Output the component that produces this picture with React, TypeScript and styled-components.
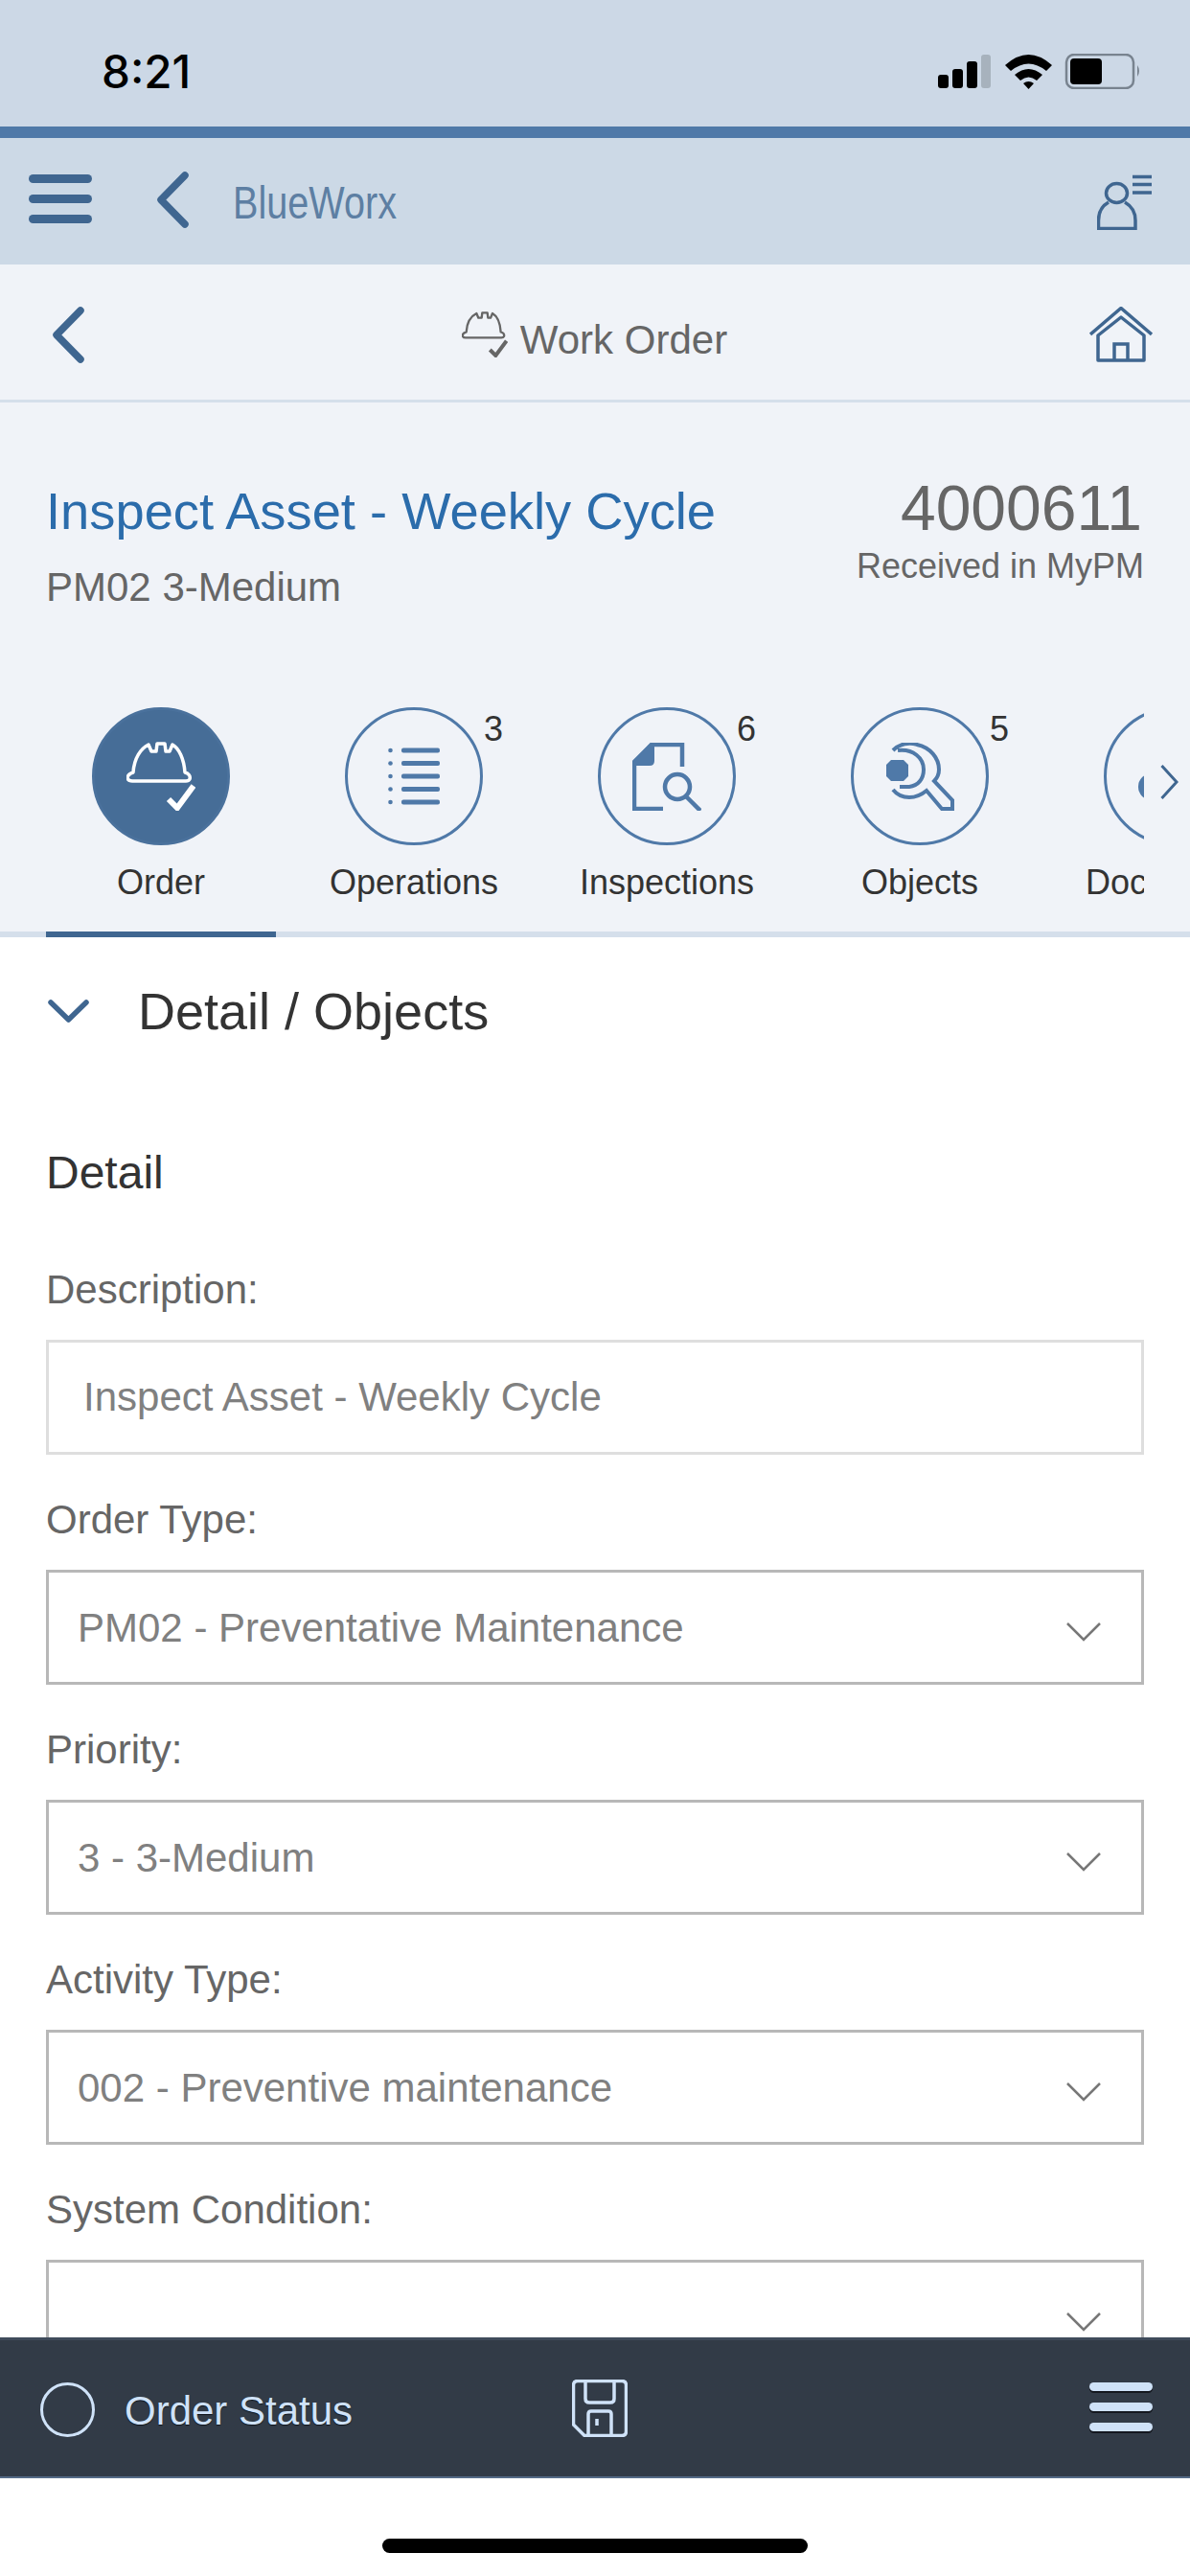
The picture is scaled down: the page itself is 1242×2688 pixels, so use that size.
import React from 'react';
import styled, { createGlobalStyle } from 'styled-components';

const GlobalStyle = createGlobalStyle`
  html, body {
    margin: 0;
    padding: 0;
    background: #fff;
  }
  body {
    font-family: 'Liberation Sans', Arial, sans-serif;
  }
  svg {
    display: block;
    flex: none;
  }
`;

const Page = styled.div`
  width: 1242px;
  height: 2688px;
  display: flex;
  flex-direction: column;
  overflow: hidden;
  background: #fff;
`;

const StatusBar = styled.div`
  height: 132px;
  flex: none;
  box-sizing: border-box;
  padding: 47px 51px 0 106px;
  background: #ccd8e6;
  display: flex;
  justify-content: space-between;
  align-items: flex-start;
`;

const Clock = styled.span`
  font-family: Inter, 'Liberation Sans', sans-serif;
  font-size: 47.5px;
  line-height: 56px;
  font-weight: 500;
  color: #000;
`;

const StatusIcons = styled.svg`
  margin-top: 9px;
`;

const BlueRule = styled.div`
  height: 12px;
  flex: none;
  background: #4f79a8;
`;

const AppBar = styled.div`
  height: 132px;
  flex: none;
  box-sizing: border-box;
  padding: 0 39px 3px 30px;
  background: #ccd9e6;
  display: flex;
  align-items: center;
`;

const AppBack = styled.div`
  margin-left: 68px;
`;

const Brand = styled.span`
  margin: 6px 0 0 46px;
  font-size: 48px;
  color: #5d7fa3;
  white-space: nowrap;
  transform: scaleX(0.825);
  transform-origin: left center;
`;

const UserIcon = styled.svg`
  margin: 5px 0 0 auto;
`;

const SubHeader = styled.div`
  height: 144px;
  flex: none;
  box-sizing: border-box;
  padding: 5px 39px 0 55px;
  background: #f0f3f8;
  border-bottom: 3px solid #d5dfeb;
  display: flex;
  align-items: center;
  justify-content: space-between;
`;

const SubTitle = styled.div`
  display: flex;
  align-items: center;
  gap: 13px;
  margin-left: 16px;
`;

const SubTitleText = styled.span`
  margin-top: 11px;
  font-size: 42px;
  color: #666;
  white-space: nowrap;
`;

const OrderHead = styled.div`
  height: 318px;
  flex: none;
  box-sizing: border-box;
  padding: 77px 48px 0;
  background: #f0f3f8;
  display: flex;
  justify-content: space-between;
  align-items: flex-start;
`;

const TitleColumn = styled.div`
  margin-top: 7px;
  display: flex;
  flex-direction: column;
`;

const NumberColumn = styled.div`
  display: flex;
  flex-direction: column;
  align-items: flex-end;
`;

const OrderTitle = styled.span`
  font-size: 54.3px;
  line-height: 60px;
  color: #2b6cab;
`;

const OrderSub = styled.span`
  margin-top: 25px;
  font-size: 42px;
  line-height: 48px;
  color: #666;
`;

const OrderNumber = styled.span`
  margin-right: 2px;
  font-size: 66px;
  line-height: 66px;
  color: #666;
`;

const OrderState = styled.span`
  margin-top: 8px;
  font-size: 36px;
  line-height: 40px;
  color: #666;
`;

const TabStrip = styled.div`
  position: relative;
  height: 240px;
  flex: none;
  box-sizing: border-box;
  background: #f0f3f8;
  border-bottom: 6px solid #d5dfeb;
  padding-left: 36px;
`;

const TabClip = styled.div`
  width: 1158px;
  height: 240px;
  display: flex;
  overflow: hidden;
`;

const Tab = styled.div<{ $active?: boolean }>`
  position: relative;
  flex: 0 0 264px;
  height: 240px;
  display: flex;
  flex-direction: column;
  align-items: center;
  &::after {
    content: '';
    display: ${(p) => (p.$active ? 'block' : 'none')};
    position: absolute;
    left: 12px;
    right: 12px;
    bottom: 0;
    height: 6px;
    background: #3f6690;
  }
`;

const TabCircle = styled.div<{ $active?: boolean }>`
  width: 144px;
  height: 144px;
  flex: none;
  box-sizing: border-box;
  border-radius: 50%;
  border: 3px solid ${(p) => (p.$active ? '#4a719c' : '#4f79a8')};
  background: ${(p) => (p.$active ? '#466d97' : 'transparent')};
  display: flex;
  align-items: center;
  justify-content: center;
`;

const TabLabel = styled.span`
  margin-top: 19px;
  font-size: 36px;
  line-height: 40px;
  color: #333;
  white-space: nowrap;
`;

const TabCount = styled.span`
  position: absolute;
  top: 5px;
  left: 205px;
  font-size: 36px;
  line-height: 36px;
  color: #333;
`;

const ScrollHint = styled.svg`
  position: absolute;
  right: 12px;
  top: 60px;
`;

const Section = styled.div`
  height: 152px;
  flex: none;
  box-sizing: border-box;
  padding: 2px 48px 0 50px;
  display: flex;
  align-items: center;
  gap: 51px;
`;

const SectionTitle = styled.span`
  font-size: 54px;
  line-height: 60px;
  color: #333;
`;

const Form = styled.div`
  flex: 1;
  min-height: 0;
  overflow: hidden;
  box-sizing: border-box;
  padding: 67px 48px 0;
  display: flex;
  flex-direction: column;
`;

const FormHeading = styled.span`
  font-size: 48px;
  line-height: 54px;
  margin: 0 0 71px;
  color: #333;
`;

const Field = styled.div`
  height: 240px;
  flex: none;
  display: flex;
  flex-direction: column;
`;

const FieldLabel = styled.span`
  font-size: 42px;
  line-height: 48px;
  margin-bottom: 28px;
  color: #666;
`;

const FieldBox = styled.div<{ $select?: boolean }>`
  height: 120px;
  flex: none;
  box-sizing: border-box;
  border: 3px solid ${(p) => (p.$select ? '#b8b8b8' : '#dedede')};
  padding: ${(p) => (p.$select ? '0 42px 0 30px' : '0 42px 0 36px')};
  display: flex;
  align-items: center;
  justify-content: space-between;
`;

const FieldValue = styled.span<{ $select?: boolean }>`
  margin-top: ${(p) => (p.$select ? '2px' : '0')};
  font-size: 42px;
  color: #808080;
  white-space: nowrap;
`;

const SelectArrow = styled.svg`
  margin-top: 10px;
`;

const BottomBar = styled.div`
  height: 147px;
  flex: none;
  box-sizing: border-box;
  padding: 0 39px 0 42px;
  background: #323b47;
  border-top: 3px solid #3f4b5b;
  border-bottom: 2px solid #546a86;
  display: flex;
  align-items: center;
`;

const StatusRing = styled.div`
  width: 57px;
  height: 57px;
  margin-top: 3px;
  flex: none;
  box-sizing: border-box;
  border-radius: 50%;
  border: 3px solid #cfe2f8;
`;

const StatusLabel = styled.span`
  margin: 5px 0 0 31px;
  width: 467px;
  font-size: 42px;
  color: #cfe2f8;
  white-space: nowrap;
  text-shadow: 0 1px 1px #10151c;
`;

const BarMenu = styled.div`
  margin-left: auto;
`;

const HomeZone = styled.div`
  height: 102px;
  flex: none;
  box-sizing: border-box;
  padding-top: 63px;
  display: flex;
  justify-content: center;
`;

const HomeBar = styled.div`
  width: 444px;
  height: 15px;
  border-radius: 8px;
  background: #000;
`;

const Menu = ({ color, shadow }: { color: string; shadow?: boolean }) => (
  <svg width="66" height="54" viewBox="0 0 66 54">
    {[0, 21, 42].map((y) => (
      <g key={y}>
        {shadow && <rect x="0" y={y + 2} width="66" height="9" rx="4.5" fill="#14181f" />}
        <rect x="0" y={y} width="66" height="9" rx="4.5" fill={color} />
      </g>
    ))}
  </svg>
);

const BackChevron = () => (
  <svg width="33" height="59" viewBox="0 0 33 59">
    <path d="M29 4 L4 29.5 L29 55" fill="none" stroke="#3f6690" strokeWidth="7.5" strokeLinecap="round" strokeLinejoin="round" />
  </svg>
);

const HatCheck = ({ color, size }: { color: string; size: number }) => (
  <svg width={size} height={size} viewBox="0 0 72 72" fill="none" stroke={color}>
    <path
      d="M7 32 C8 17 15 7 23 3 L26 10 L31 10 L32 2 L40 2 L41 10 L45 10 L48 3 C55 7 60 18 61 32 C65 33 67 36 66 39 Q65 41 62 41 L6 41 Q2 41 1 38 Q1 34 7 32 Z"
      strokeWidth="3.5"
      strokeLinejoin="round"
    />
    <path d="M44 60 L53 69 L70 46" strokeWidth="6" />
  </svg>
);

const ListIcon = () => (
  <svg width="54" height="60" viewBox="0 0 54 60" fill="#4f79a8">
    {[3, 16.5, 30, 43.5, 57].map((y) => (
      <g key={y}>
        <circle cx="2.5" cy={y} r="2.3" />
        <rect x="14" y={y - 2.5} width="40" height="5" rx="2" />
      </g>
    ))}
  </svg>
);

const InspectIcon = () => (
  <svg width="72" height="71" viewBox="0 0 72 71" fill="none" stroke="#4f79a8" strokeWidth="4.5">
    <path d="M52 25 V2 H20 L2 20 V69 H32" />
    <path d="M19 0 L0 20 V24 H18 Q23 24 23 19 V0 Z" fill="#4f79a8" stroke="none" />
    <circle cx="47" cy="46" r="13" />
    <path d="M56 56 L71 71" />
  </svg>
);

const WrenchIcon = () => (
  <svg width="71" height="71" viewBox="0 0 71 71" fill="none" stroke="#4f79a8" strokeWidth="4">
    <path d="M5 18 H18 L23 23 V35 L18 40 H5 L0 35 V23 Z" fill="#4f79a8" stroke="none" />
    <path d="M7 8 C14 1 24 -1 32 2 C46 5 55 16 55 28 C55 33 53 37 50 40 L69 60 V69 H58 L42 50 C36 55 30 57 24 57 C17 57 11 54 7 49" />
    <path d="M12 8 C28 6 39 16 39 28 C39 38 33 45 24 46 L14 46" />
  </svg>
);

const DocIcon = () => (
  <svg width="72" height="72" viewBox="0 0 72 72" fill="#4f79a8">
    <circle cx="14" cy="47" r="14" />
  </svg>
);

const TABS = [
  { label: 'Order', active: true, icon: <HatCheck color="#fff" size={72} /> },
  { label: 'Operations', count: 3, icon: <ListIcon /> },
  { label: 'Inspections', count: 6, icon: <InspectIcon /> },
  { label: 'Objects', count: 5, icon: <WrenchIcon /> },
  { label: 'Documents', icon: <DocIcon /> },
];

const FIELDS = [
  { label: 'Description:', value: 'Inspect Asset - Weekly Cycle' },
  { label: 'Order Type:', value: 'PM02 - Preventative Maintenance', select: true },
  { label: 'Priority:', value: '3 - 3-Medium', select: true },
  { label: 'Activity Type:', value: '002 - Preventive maintenance', select: true },
  { label: 'System Condition:', value: '', select: true },
];

export default function App() {
  return (
    <Page>
      <GlobalStyle />
      <StatusBar>
        <Clock>8:21</Clock>
        <StatusIcons width="212" height="37" viewBox="0 0 212 37">
          <rect x="0" y="22" width="11" height="14" rx="3" fill="#000" />
          <rect x="15" y="16" width="11" height="20" rx="3" fill="#000" />
          <rect x="30" y="8" width="11" height="28" rx="3" fill="#000" />
          <rect x="45" y="1" width="10" height="35" rx="3" fill="#a7b2bd" />
          <path d="M70 12 Q94.5 -10 119 12 L113 18 Q94.5 3 76 18 Z" fill="#000" />
          <path d="M80 22 Q94.5 10 109 22 L103 28 Q94.5 21 86 28 Z" fill="#000" />
          <path d="M89 31 Q94.5 27 100 31 L94.5 37 Z" fill="#000" />
          <rect x="134" y="1" width="70" height="35" rx="8" fill="none" stroke="#78838f" strokeWidth="2.5" />
          <rect x="138" y="5" width="33" height="27" rx="4" fill="#000" />
          <path d="M208 12 Q212 18 208 24 Z" fill="#78838f" />
        </StatusIcons>
      </StatusBar>
      <BlueRule />
      <AppBar>
        <Menu color="#3f6690" />
        <AppBack>
          <BackChevron />
        </AppBack>
        <Brand>BlueWorx</Brand>
        <UserIcon width="58" height="58" viewBox="0 0 58 58" fill="none" stroke="#3f6690" strokeWidth="3.5">
          <ellipse cx="20.5" cy="19.5" rx="11" ry="10" />
          <path d="M12 29 C5 33 1.5 40 1.5 48 V56.5 H40 V48 C40 40 36 33 29 29" />
          <path d="M37 2.5 H57 M37 10.5 H57 M37 19 H57" />
        </UserIcon>
      </AppBar>
      <SubHeader>
        <BackChevron />
        <SubTitle>
          <HatCheck color="#666" size={48} />
          <SubTitleText>Work Order</SubTitleText>
        </SubTitle>
        <svg width="66" height="58" viewBox="0 0 66 58" fill="none" stroke="#3f6690" strokeWidth="3.5">
          <path d="M1 29 L33 1.5 L65 29" />
          <path d="M9 30 L33 11 L57 30 V56 H9 Z" strokeLinejoin="round" />
          <path d="M26 56 V39 H40 V56" />
        </svg>
      </SubHeader>
      <OrderHead>
        <TitleColumn>
          <OrderTitle>Inspect Asset - Weekly Cycle</OrderTitle>
          <OrderSub>PM02 3-Medium</OrderSub>
        </TitleColumn>
        <NumberColumn>
          <OrderNumber>4000611</OrderNumber>
          <OrderState>Received in MyPM</OrderState>
        </NumberColumn>
      </OrderHead>
      <TabStrip>
        <TabClip>
          {TABS.map((t) => (
            <Tab key={t.label} $active={t.active}>
              <TabCircle $active={t.active}>{t.icon}</TabCircle>
              <TabLabel>{t.label}</TabLabel>
              {t.count !== undefined && <TabCount>{t.count}</TabCount>}
            </Tab>
          ))}
        </TabClip>
        <ScrollHint width="19" height="36" viewBox="0 0 19 36">
          <path d="M1.5 1 L17 18 L1.5 35" fill="none" stroke="#3f6690" strokeWidth="3" />
        </ScrollHint>
      </TabStrip>
      <Section>
        <svg width="43" height="24" viewBox="0 0 43 24">
          <path d="M3 3 L21.5 21 L40 3" fill="none" stroke="#3f6690" strokeWidth="5.5" strokeLinecap="round" strokeLinejoin="round" />
        </svg>
        <SectionTitle>Detail / Objects</SectionTitle>
      </Section>
      <Form>
        <FormHeading>Detail</FormHeading>
        {FIELDS.map((f) => (
          <Field key={f.label}>
            <FieldLabel>{f.label}</FieldLabel>
            <FieldBox $select={f.select}>
              <FieldValue $select={f.select}>{f.value}</FieldValue>
              {f.select && (
                <SelectArrow width="36" height="20" viewBox="0 0 36 20">
                  <path d="M1 1 L18 18 L35 1" fill="none" stroke="#777" strokeWidth="2.5" />
                </SelectArrow>
              )}
            </FieldBox>
          </Field>
        ))}
      </Form>
      <BottomBar>
        <StatusRing />
        <StatusLabel>Order Status</StatusLabel>
        <svg width="58" height="60" viewBox="0 0 58 60" fill="none" stroke="#cfe2f8" strokeWidth="3.5">
          <path d="M6 1.5 H52 Q56.5 1.5 56.5 6 V54 Q56.5 58.5 52 58.5 H13 L1.5 47 V6 Q1.5 1.5 6 1.5 Z" />
          <path d="M14 1.5 V20 Q14 24 18 24 H40 Q44 24 44 20 V1.5" />
          <path d="M17 58.5 V36 Q17 33 20 33 H38 Q41 33 41 36 V58.5" />
          <path d="M26 41 V48" />
        </svg>
        <BarMenu>
          <Menu color="#cfe2f8" shadow />
        </BarMenu>
      </BottomBar>
      <HomeZone>
        <HomeBar />
      </HomeZone>
    </Page>
  );
}
